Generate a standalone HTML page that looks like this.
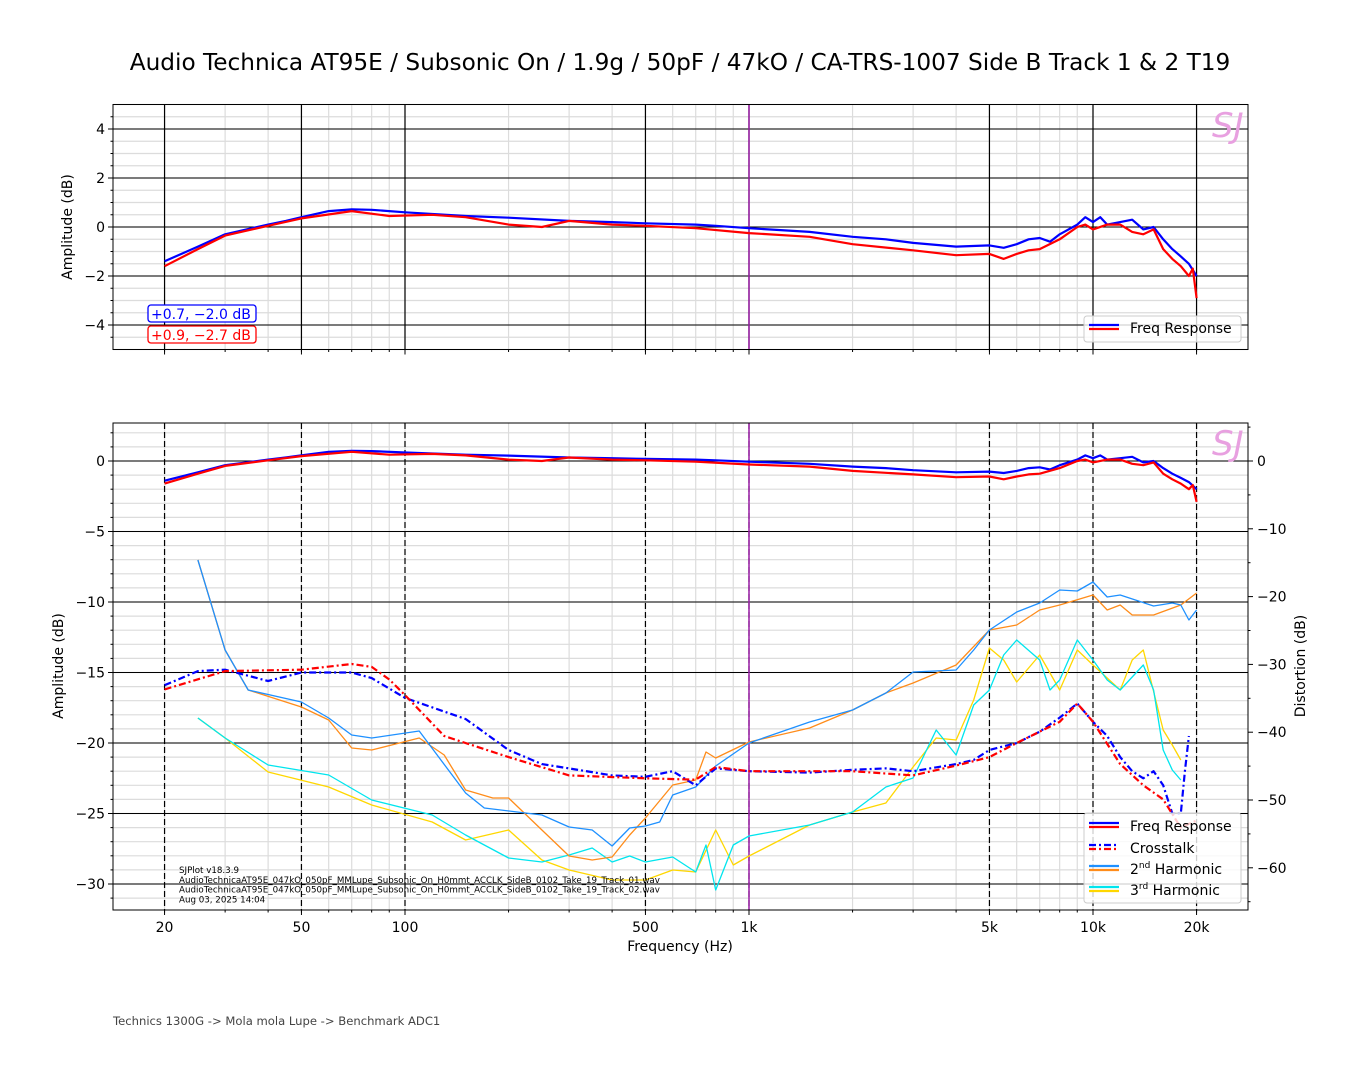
<!DOCTYPE html>
<html><head><meta charset="utf-8"><style>
html,body{margin:0;padding:0;background:#fff;width:1361px;height:1080px;overflow:hidden}
svg{display:block;font-family:"DejaVu Sans","Liberation Sans",sans-serif}
</style></head><body>
<svg id="s" width="1361" height="1080" xmlns="http://www.w3.org/2000/svg">
<text x="680" y="70" font-size="23.2" text-anchor="middle">Audio Technica AT95E / Subsonic On / 1.9g / 50pF / 47kO / CA-TRS-1007 Side B Track 1 &amp; 2 T19</text>
<g id="g"></g>
</svg>
<script>
const NS="http://www.w3.org/2000/svg",G=document.getElementById('g');
function el(t,a,txt){const e=document.createElementNS(NS,t);for(const k in a)e.setAttribute(k,a[k]);if(txt!==undefined)e.textContent=txt;G.appendChild(e);return e;}
const L=113,R=1248;
const X=f=>405+(Math.log10(f)-2)*344;
const T0=227,TS=24.5,TT=104.5,TB=349.5;
const B0=461,BS=14.1,BT=423,BB=910;
function minorsX(top,bot){
  for(let d=10;d<=10000;d*=10)for(let m=1;m<10;m++){const f=d*m;const x=X(f);if(x<L||x>R)continue;
    el('line',{x1:x,x2:x,y1:top,y2:bot,stroke:'#dcdcdc','stroke-width':1.2});}
}
function majorsX(top,bot,dash){
  [20,50,100,500,1000,5000,10000,20000].forEach(f=>{const x=X(f);el('line',{x1:x,x2:x,y1:top,y2:bot,stroke:'#000','stroke-width':1.2,'stroke-dasharray':dash||'none'});});
}
minorsX(TT,TB);
for(let v=-5;v<=5;v+=0.5){const y=T0-v*TS;el('line',{x1:L,x2:R,y1:y,y2:y,stroke:'#dcdcdc','stroke-width':1.2});}
for(let v=-4;v<=4;v+=2){const y=T0-v*TS;el('line',{x1:L,x2:R,y1:y,y2:y,stroke:'#000','stroke-width':1.1});}
majorsX(TT,TB);
el('line',{x1:X(1000),x2:X(1000),y1:TT,y2:TB,stroke:'#9b1fa8','stroke-width':1.5});
minorsX(BT,BB);
for(let v=2;v>=-31;v-=1){const y=B0-v*BS;el('line',{x1:L,x2:R,y1:y,y2:y,stroke:'#dcdcdc','stroke-width':1.2});}
for(let v=0;v>=-30;v-=5){const y=B0-v*BS;el('line',{x1:L,x2:R,y1:y,y2:y,stroke:'#000','stroke-width':1.1});}
majorsX(BT,BB,'6,3');
el('line',{x1:X(1000),x2:X(1000),y1:BT,y2:BB,stroke:'#9b1fa8','stroke-width':1.5});
function tickX(bot,labels){
  [20,50,100,500,1000,5000,10000,20000].forEach((f,i)=>{const x=X(f);el('line',{x1:x,x2:x,y1:bot,y2:bot+5,stroke:'#000'});
   if(labels)el('text',{x:x,y:bot+22,'font-size':14,'text-anchor':'middle'},['20','50','100','500','1k','5k','10k','20k'][i]);});
  for(let d=10;d<=10000;d*=10)for(let m=1;m<10;m++){const x=X(d*m);if(x<L||x>R)continue;el('line',{x1:x,x2:x,y1:bot,y2:bot+2.5,stroke:'#000'});}
}
tickX(TB,false);tickX(BB,true);
[4,2,0,-2,-4].forEach(v=>{const y=T0-v*TS;el('line',{x1:L-5,x2:L,y1:y,y2:y,stroke:'#000'});el('text',{x:L-8,y:y+5,'font-size':14,'text-anchor':'end'},(v<0?'\u2212':'')+Math.abs(v));});
for(let v=-4.5;v<=4.5;v+=0.5){if(v%2===0)continue;const y=T0-v*TS;el('line',{x1:L-2.5,x2:L,y1:y,y2:y,stroke:'#000'});}
[0,-5,-10,-15,-20,-25,-30].forEach(v=>{const y=B0-v*BS;el('line',{x1:L-5,x2:L,y1:y,y2:y,stroke:'#000'});el('text',{x:L-8,y:y+5,'font-size':14,'text-anchor':'end'},(v<0?'\u2212':'')+Math.abs(v));});
for(let v=2;v>=-31;v--){if(v%5===0)continue;const y=B0-v*BS;el('line',{x1:L-2.5,x2:L,y1:y,y2:y,stroke:'#000'});}
const RS=6.78;
[0,-10,-20,-30,-40,-50,-60].forEach(v=>{const y=B0-v*RS;el('line',{x1:R,x2:R+5,y1:y,y2:y,stroke:'#000'});el('text',{x:R+9,y:y+5,'font-size':14},(v<0?'\u2212':'')+Math.abs(v));});
for(let v=5;v>=-65;v-=5){if(v%10===0)continue;const y=B0-v*RS;el('line',{x1:R,x2:R+2.5,y1:y,y2:y,stroke:'#000'});}
el('text',{x:72,y:227,'font-size':14,'text-anchor':'middle',transform:'rotate(-90 72 227)'},'Amplitude (dB)');
el('text',{x:63,y:666,'font-size':14,'text-anchor':'middle',transform:'rotate(-90 63 666)'},'Amplitude (dB)');
el('text',{x:1305,y:666,'font-size':14,'text-anchor':'middle',transform:'rotate(-90 1305 666)'},'Distortion (dB)');
el('text',{x:680,y:951,'font-size':14,'text-anchor':'middle'},'Frequency (Hz)');
function path(pts,yf,attrs){let d='';pts.forEach((p,i)=>{d+=(i?'L':'M')+X(p[0]).toFixed(1)+','+yf(p[1]).toFixed(1);});return el('path',Object.assign({d:d,fill:'none','stroke-linejoin':'round'},attrs));}
const P=a=>{const r=[];for(let i=0;i<a.length;i+=2)r.push([a[i],a[i+1]]);return r;};
const frB=P([20,-1.4,25,-0.8,30,-0.3,40,0.1,45,0.25,50,0.4,60,0.65,70,0.72,80,0.7,100,0.6,150,0.45,200,0.38,300,0.25,400,0.2,500,0.15,700,0.1,800,0.05,1000,-0.05,1500,-0.2,2000,-0.4,2500,-0.5,3000,-0.65,4000,-0.8,5000,-0.75,5500,-0.85,6000,-0.7,6500,-0.5,7000,-0.45,7500,-0.6,8000,-0.3,9000,0.1,9500,0.4,10000,0.2,10500,0.4,11000,0.1,12000,0.2,13000,0.3,14000,-0.1,15000,0.0,16000,-0.5,17000,-0.9,18000,-1.2,19000,-1.5,20000,-2.0]);
const frR=P([20,-1.6,25,-0.9,30,-0.35,40,0.05,50,0.35,70,0.65,90,0.45,120,0.5,150,0.4,200,0.1,250,0.0,300,0.25,400,0.1,500,0.05,700,-0.05,1000,-0.25,1500,-0.4,2000,-0.7,3000,-0.95,4000,-1.15,5000,-1.1,5500,-1.3,6000,-1.1,6500,-0.95,7000,-0.9,8000,-0.5,9000,0.0,9500,0.1,10000,-0.1,11000,0.1,12000,0.1,13000,-0.2,14000,-0.3,15000,-0.1,16000,-0.9,17000,-1.3,18000,-1.6,19000,-2.0,19500,-1.7,20000,-2.9]);
const yT=v=>T0-v*TS, yB=v=>B0-v*BS, yP=v=>v;
path(frB,yT,{stroke:'#0000ff','stroke-width':2.2});path(frR,yT,{stroke:'#ff0000','stroke-width':2.2});
const h2b=P([25,560,30,650,35,690,50,702,60,718,70,735,80,738,110,731,150,793,170,808,250,815,300,827,350,830,400,846,450,828,500,826,550,822,600,795,700,787,800,766,1000,743,1500,722,2000,710,2500,693,3000,672,4000,670,4500,650,5000,630,6000,612,7000,603,8000,590,9000,591,10000,582,11000,597,12000,595,15000,606,17000,603,18000,605,19000,620,20000,610]);
const h2o=P([25,560,30,650,35,690,50,707,60,720,70,748,80,750,110,738,130,755,150,790,180,798,200,798,250,830,300,856,350,860,400,857,450,835,500,818,600,785,700,780,750,752,800,758,1000,742,1500,728,2000,710,2500,693,3000,683,4000,665,5000,630,6000,625,7000,610,8000,605,10000,595,11000,610,12000,605,13000,615,15000,615,18000,605,20000,593]);
const h3c=P([25,718,30,738,40,765,60,775,80,800,120,815,150,835,200,858,250,862,300,855,350,848,400,862,450,856,500,862,600,857,700,872,750,845,800,890,900,845,1000,836,1500,825,2000,812,2500,787,3000,778,3500,730,4000,755,4500,705,5000,690,5500,655,6000,640,7000,660,7500,690,8000,680,9000,640,10000,660,11000,680,12000,690,14000,665,15000,690,16000,750,17000,770,18000,780]);
const h3y=P([25,718,30,738,40,772,60,787,80,805,120,822,150,840,200,830,250,860,300,870,400,880,500,880,600,870,700,872,800,830,900,865,1000,856,1500,825,2000,812,2500,803,3000,767,3500,738,4000,740,4500,700,5000,648,5500,660,6000,682,7000,655,8000,690,9000,650,10000,665,12000,690,13000,660,14000,650,16000,730,17000,745,18000,760]);
path(h3y,yP,{stroke:'#ffd700','stroke-width':1.3});
path(h3c,yP,{stroke:'#00e5ee','stroke-width':1.3});
path(h2o,yP,{stroke:'#ff8c1a','stroke-width':1.3});
path(h2b,yP,{stroke:'#1e90ff','stroke-width':1.3});
const ctB=P([20,-15.9,25,-14.9,30,-14.8,40,-15.6,50,-15,70,-15,80,-15.4,100,-16.8,150,-18.3,200,-20.5,250,-21.5,300,-21.8,400,-22.3,500,-22.4,600,-22,700,-23,800,-21.8,1000,-22,1500,-22.1,2000,-21.9,2500,-21.8,3000,-22,4000,-21.5,4500,-21.2,5000,-20.5,6000,-20,7000,-19.2,8000,-18.2,9000,-17.2,10000,-18.5,11000,-19.5,12000,-21,13000,-22,14000,-22.5,15000,-22,16000,-23,17000,-25,18000,-25,18500,-22,19000,-19.5]);
const ctR=P([20,-16.2,30,-14.9,50,-14.8,70,-14.4,80,-14.6,90,-15.5,100,-16.6,130,-19.5,200,-21,300,-22.3,500,-22.5,700,-22.6,800,-21.7,1000,-22,2000,-22,3000,-22.3,4000,-21.6,5000,-21,6000,-20,8000,-18.5,9000,-17.2,10000,-18.5,12000,-21.5,14000,-23,16000,-24,18000,-26,20000,-25.5]);
path(ctB,yB,{stroke:'#0000ff','stroke-width':2.2,'stroke-dasharray':'7,3,2,3'});
path(ctR,yB,{stroke:'#ff0000','stroke-width':2.2,'stroke-dasharray':'7,3,2,3'});
path(frB,yB,{stroke:'#0000ff','stroke-width':2.2});path(frR,yB,{stroke:'#ff0000','stroke-width':2.2});
el('rect',{x:L,y:TT,width:R-L,height:TB-TT,fill:'none',stroke:'#000','stroke-width':1});
el('rect',{x:L,y:BT,width:R-L,height:BB-BT,fill:'none',stroke:'#000','stroke-width':1});
el('text',{x:1212,y:137,'font-size':34,fill:'#e8a0e0','font-style':'italic'},'SJ');
el('text',{x:1212,y:455,'font-size':34,fill:'#e8a0e0','font-style':'italic'},'SJ');
el('rect',{x:148,y:305,width:108,height:17,rx:3,fill:'#fff',stroke:'#0000ff','stroke-width':1.3});
el('text',{x:151,y:319,'font-size':14,fill:'#0000ff'},'+0.7, \u22122.0 dB');
el('rect',{x:148,y:326,width:108,height:17,rx:3,fill:'#fff',stroke:'#ff0000','stroke-width':1.3});
el('text',{x:151,y:340,'font-size':14,fill:'#ff0000'},'+0.9, \u22122.7 dB');
el('rect',{x:1084,y:316,width:157,height:26,rx:3,fill:'#fff','fill-opacity':0.8,stroke:'#ccc'});
el('line',{x1:1089,x2:1119,y1:325,y2:325,stroke:'#0000ff','stroke-width':2.2});
el('line',{x1:1089,x2:1119,y1:329,y2:329,stroke:'#ff0000','stroke-width':2.2});
el('text',{x:1130,y:333,'font-size':14},'Freq Response');
el('rect',{x:1084,y:813,width:157,height:90,rx:3,fill:'#fff','fill-opacity':0.8,stroke:'#ccc'});
function lg(y,c1,c2,dash,label,sup){
 el('line',{x1:1089,x2:1119,y1:y-3,y2:y-3,stroke:c1,'stroke-width':2.2,'stroke-dasharray':dash||'none'});
 el('line',{x1:1089,x2:1119,y1:y+1,y2:y+1,stroke:c2,'stroke-width':2.2,'stroke-dasharray':dash||'none'});
 const t=el('text',{x:1130,y:y+5,'font-size':14});
 if(sup){t.textContent=label[0];const s=document.createElementNS(NS,'tspan');s.setAttribute('font-size','9');s.setAttribute('dy','-6');s.textContent=sup;t.appendChild(s);const r=document.createElementNS(NS,'tspan');r.setAttribute('dy','6');r.textContent=' '+label.slice(1);t.appendChild(r);}
 else t.textContent=label;
}
lg(826,'#0000ff','#ff0000',null,'Freq Response');
lg(848,'#0000ff','#ff0000','7,3,2,3','Crosstalk');
lg(869,'#1e90ff','#ff8c1a',null,'2Harmonic','nd');
lg(890,'#00e5ee','#ffd700',null,'3Harmonic','rd');
['SJPlot v18.3.9','AudioTechnicaAT95E_047kO_050pF_MMLupe_Subsonic_On_H0mmt_ACCLK_SideB_0102_Take_19_Track_01.wav','AudioTechnicaAT95E_047kO_050pF_MMLupe_Subsonic_On_H0mmt_ACCLK_SideB_0102_Take_19_Track_02.wav','Aug 03, 2025 14:04'].forEach((s,i)=>el('text',{x:179,y:873+i*9.8,'font-size':8.7},s));
el('text',{x:113,y:1025,'font-size':11.6,fill:'#444'},'Technics 1300G -> Mola mola Lupe -> Benchmark ADC1');
</script>
</body></html>
